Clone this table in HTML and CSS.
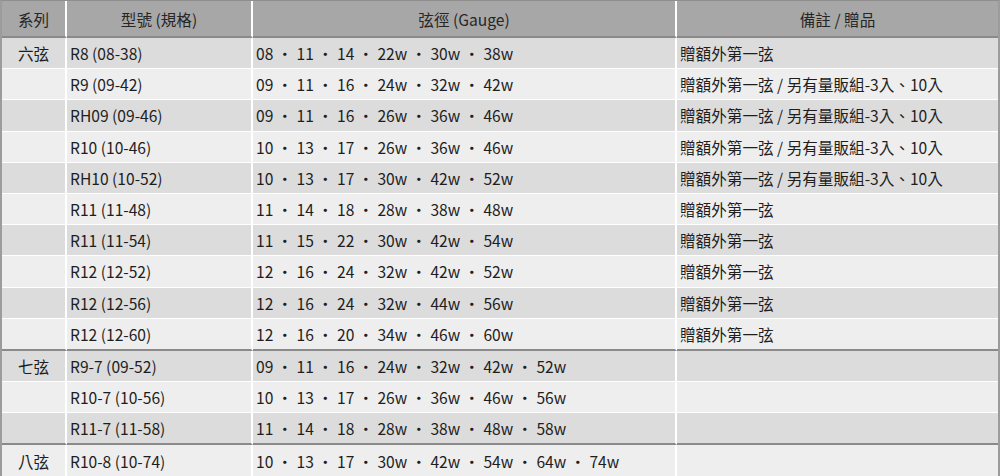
FILE: index.html
```html
<!DOCTYPE html>
<html lang="zh-Hant">
<head>
<meta charset="utf-8">
<title>弦規格表</title>
<link rel="stylesheet" href="styles.css">
</head>
<body>
<table class="spec">
  <thead>
    <tr>
      <th class="c-series">系列</th>
      <th class="c-model">型號 (規格)</th>
      <th class="c-gauge">弦徑 (Gauge)</th>
      <th class="c-note">備註 / 贈品</th>
    </tr>
  </thead>
  <tbody>
    <tr class="odd"><td class="series">六弦</td><td>R8 (08-38)</td><td class="gauge">08 · 11 · 14 · 22w · 30w · 38w</td><td>贈額外第一弦</td></tr>
    <tr class="even"><td class="series"></td><td>R9 (09-42)</td><td class="gauge">09 · 11 · 16 · 24w · 32w · 42w</td><td>贈額外第一弦 / 另有量販組-3入、10入</td></tr>
    <tr class="odd"><td class="series"></td><td>RH09 (09-46)</td><td class="gauge">09 · 11 · 16 · 26w · 36w · 46w</td><td>贈額外第一弦 / 另有量販組-3入、10入</td></tr>
    <tr class="even"><td class="series"></td><td>R10 (10-46)</td><td class="gauge">10 · 13 · 17 · 26w · 36w · 46w</td><td>贈額外第一弦 / 另有量販組-3入、10入</td></tr>
    <tr class="odd"><td class="series"></td><td>RH10 (10-52)</td><td class="gauge">10 · 13 · 17 · 30w · 42w · 52w</td><td>贈額外第一弦 / 另有量販組-3入、10入</td></tr>
    <tr class="even"><td class="series"></td><td>R11 (11-48)</td><td class="gauge">11 · 14 · 18 · 28w · 38w · 48w</td><td>贈額外第一弦</td></tr>
    <tr class="odd"><td class="series"></td><td>R11 (11-54)</td><td class="gauge">11 · 15 · 22 · 30w · 42w · 54w</td><td>贈額外第一弦</td></tr>
    <tr class="even"><td class="series"></td><td>R12 (12-52)</td><td class="gauge">12 · 16 · 24 · 32w · 42w · 52w</td><td>贈額外第一弦</td></tr>
    <tr class="odd"><td class="series"></td><td>R12 (12-56)</td><td class="gauge">12 · 16 · 24 · 32w · 44w · 56w</td><td>贈額外第一弦</td></tr>
    <tr class="even group-end"><td class="series"></td><td>R12 (12-60)</td><td class="gauge">12 · 16 · 20 · 34w · 46w · 60w</td><td>贈額外第一弦</td></tr>
    <tr class="odd"><td class="series">七弦</td><td>R9-7 (09-52)</td><td class="gauge">09 · 11 · 16 · 24w · 32w · 42w · 52w</td><td></td></tr>
    <tr class="even"><td class="series"></td><td>R10-7 (10-56)</td><td class="gauge">10 · 13 · 17 · 26w · 36w · 46w · 56w</td><td></td></tr>
    <tr class="odd group-end"><td class="series"></td><td>R11-7 (11-58)</td><td class="gauge">11 · 14 · 18 · 28w · 38w · 48w · 58w</td><td></td></tr>
    <tr class="even"><td class="series">八弦</td><td>R10-8 (10-74)</td><td class="gauge">10 · 13 · 17 · 30w · 42w · 54w · 64w · 74w</td><td></td></tr>
  </tbody>
</table>
</body>
</html>
```
FILE: styles.css
```css
html, body {
  margin: 0;
  padding: 0;
  background: #ffffff;
}

body {
  font-family: "Noto Sans CJK TC", "Noto Sans", sans-serif;
  font-size: 15.6px;
  color: #1e1e1e;
}

.spec {
  width: 1000px;
  border-collapse: separate;
  border-spacing: 0;
  border-top: 1px solid #8e8e8e;
  border-left: 2px solid #9c9c9c;
  border-right: 2px solid #9c9c9c;
  table-layout: fixed;
}

.spec th {
  height: 35px;
  padding: 0;
  background: #a7a7a7;
  color: #262626;
  font-weight: normal;
  text-align: center;
  border-bottom: 2px solid #8a8a8a;
  border-right: 2px solid #ffffff;
}

.spec th:last-child,
.spec td:last-child {
  border-right: none;
}

.c-series { width: 63px; }
.c-model { width: 184px; }
.c-gauge { width: 422px; }

.spec td {
  height: 30.2px;
  padding: 0 0 0 3px;
  border-right: 2px solid #ffffff;
  border-bottom: 1px solid #ffffff;
  white-space: nowrap;
}

.spec td.gauge {
  word-spacing: 0.3px;
}

.spec td.series {
  text-align: center;
  padding: 0;
}

.odd td { background: #dcdcdc; }
.even td { background: #eeeeee; }

.group-end td {
  border-bottom: 2px solid #8a8a8a;
}
```
